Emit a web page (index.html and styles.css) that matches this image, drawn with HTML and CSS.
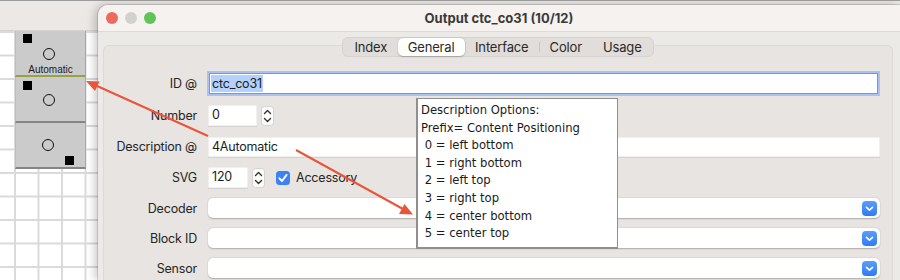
FILE: index.html
```html
<!DOCTYPE html>
<html>
<head>
<meta charset="utf-8">
<link rel="stylesheet" href="styles.css">
</head>
<body>
<div class="app">
  <div class="canvas-pane">
    <div class="toolbar"></div>
    <div class="grid">
      <div class="block block-sel">
        <span class="sq sq-tl"></span>
        <span class="ring ring-1"></span>
        <span class="blabel">Automatic</span>
      </div>
      <div class="block">
        <span class="sq sq-tl2"></span>
        <span class="ring ring-1"></span>
      </div>
      <div class="block">
        <span class="ring ring-3"></span>
        <span class="sq sq-br"></span>
      </div>
    </div>
  </div>

  <div class="window">
    <div class="titlebar">
      <div class="lights">
        <span class="light red"></span>
        <span class="light grey"></span>
        <span class="light green"></span>
      </div>
      <div class="title">Output ctc_co31 (10/12)</div>
    </div>
    <div class="content">
      <div class="tabbox">
        <div class="tabs">
          <span class="tab">Index</span>
          <span class="tab active">General</span>
          <span class="tab sep">Interface</span>
          <span class="tab sep">Color</span>
          <span class="tab">Usage</span>
        </div>
        <div class="form">
          <div class="lbl r-id">ID @</div>
          <div class="field focus r-id"><span class="sel">ctc_co31</span></div>

          <div class="lbl">Number</div>
          <div class="inline">
            <div class="field num">0</div>
            <svg class="stepper" width="13" height="20" viewBox="0 0 13 20"><rect x="0.5" y="0.5" width="12" height="19" rx="3" fill="#fbfbfb" stroke="#d6d3d0"/><path d="M3.5 7.5 L6.5 4.5 L9.5 7.5" fill="none" stroke="#333" stroke-width="1.4" stroke-linecap="round" stroke-linejoin="round"/><path d="M3.5 12.5 L6.5 15.5 L9.5 12.5" fill="none" stroke="#333" stroke-width="1.4" stroke-linecap="round" stroke-linejoin="round"/></svg>
          </div>

          <div class="lbl">Description @</div>
          <div class="field">4Automatic</div>

          <div class="lbl">SVG</div>
          <div class="inline">
            <div class="field svg">120</div>
            <svg class="stepper" width="13" height="20" viewBox="0 0 13 20"><rect x="0.5" y="0.5" width="12" height="19" rx="3" fill="#fbfbfb" stroke="#d6d3d0"/><path d="M3.5 7.5 L6.5 4.5 L9.5 7.5" fill="none" stroke="#333" stroke-width="1.4" stroke-linecap="round" stroke-linejoin="round"/><path d="M3.5 12.5 L6.5 15.5 L9.5 12.5" fill="none" stroke="#333" stroke-width="1.4" stroke-linecap="round" stroke-linejoin="round"/></svg>
            <svg class="check" width="14" height="14" viewBox="0 0 14 14"><rect x="0" y="0" width="14" height="14" rx="3.5" fill="#3a82f6"/><path d="M3.4 7.3 L6 10 L10.6 3.9" fill="none" stroke="#fff" stroke-width="1.9" stroke-linecap="round" stroke-linejoin="round"/></svg>
            <span class="chk-label">Accessory</span>
          </div>

          <div class="lbl">Decoder</div>
          <div class="field select"><span class="pop"><svg width="15" height="15" viewBox="0 0 15 15"><path d="M4.5 6.3 L7.5 9.2 L10.5 6.3" fill="none" stroke="#fff" stroke-width="1.6" stroke-linecap="round" stroke-linejoin="round"/></svg></span></div>

          <div class="lbl">Block ID</div>
          <div class="field select"><span class="pop"><svg width="15" height="15" viewBox="0 0 15 15"><path d="M4.5 6.3 L7.5 9.2 L10.5 6.3" fill="none" stroke="#fff" stroke-width="1.6" stroke-linecap="round" stroke-linejoin="round"/></svg></span></div>

          <div class="lbl">Sensor</div>
          <div class="field select"><span class="pop"><svg width="15" height="15" viewBox="0 0 15 15"><path d="M4.5 6.3 L7.5 9.2 L10.5 6.3" fill="none" stroke="#fff" stroke-width="1.6" stroke-linecap="round" stroke-linejoin="round"/></svg></span></div>
        </div>
      </div>
    </div>
  </div>
</div>

<div class="tooltip"><div>Description Options:</div><div>Prefix= Content Positioning</div><div>&nbsp;0 = left bottom</div><div>&nbsp;1 = right bottom</div><div>&nbsp;2 = left top</div><div>&nbsp;3 = right top</div><div>&nbsp;4 = center bottom</div><div>&nbsp;5 = center top</div></div>

<svg class="arrows" width="900" height="280" viewBox="0 0 900 280">
  <line x1="208" y1="135" x2="96" y2="84.5" stroke="#e9553a" stroke-width="2"/>
  <polygon points="86,80 99.5,80.5 95,90" fill="#e9553a"/>
  <line x1="296" y1="149" x2="403" y2="208" stroke="#e9553a" stroke-width="2"/>
  <polygon points="413,213.5 399,213 404.5,203" fill="#e9553a"/>
</svg>
</body>
</html>
```

FILE: styles.css
```css
html, body {
  margin: 0;
  padding: 0;
}
body {
  width: 900px;
  height: 280px;
  overflow: hidden;
  position: relative;
  background: #ebe8e5;
  border-top: 1px solid #9c9c9c;
  box-sizing: border-box;
  font-family: "Inter", "Liberation Sans", sans-serif;
  color: #262626;
}
.app {
  display: flex;
  height: 279px;
}
.canvas-pane {
  width: 98px;
  flex: none;
  display: flex;
  flex-direction: column;
}
.toolbar {
  height: 29px;
  border-bottom: 1px solid #d6d4d1;
  background: #ebe8e5;
}
.grid {
  flex: 1;
  background-color: #fff;
  background-image:
    linear-gradient(to right, #dadada 2px, transparent 2px),
    linear-gradient(to bottom, #dadada 2px, transparent 2px);
  background-size: 23.5px 23.5px;
  background-position: 14px 0;
  display: flex;
  flex-direction: column;
  padding-left: 15px;
}
.block {
  width: 69px;
  height: 44px;
  background: #cbcbcb;
  border-bottom: 2px solid #858585;
  border-right: 1px solid #a8a8a8;
  border-left: 1px solid #bdbdbd;
  box-sizing: content-box;
  position: relative;
}
.block-sel {
  border-right: 1px solid #a9b05a;
  border-bottom: 2px solid #98a444;
}
.sq {
  position: absolute;
  width: 9px;
  height: 9px;
  background: #000;
}
.sq-tl { left: 7px; top: 3px; }
.sq-tl2 { left: 7px; top: 4px; }
.sq-br { left: 49px; top: 33px; }
.ring {
  position: absolute;
  width: 10px;
  height: 10px;
  border: 1.5px solid #111;
  border-radius: 50%;
}
.ring-1 { left: 27px; top: 17px; }
.ring-3 { left: 26px; top: 16px; }
.blabel {
  position: absolute;
  left: 0;
  right: 0;
  top: 33px;
  text-align: center;
  font-family: "Liberation Sans", sans-serif;
  font-size: 10px;
  color: #1a1a1a;
}

.window {
  flex: 1;
  margin-top: 4px;
  background: #eceae7;
  border-top-left-radius: 10px;
  box-shadow: -3px 0 10px rgba(0, 0, 0, 0.22), 0 0 0 1px rgba(0, 0, 0, 0.12);
  overflow: hidden;
  display: flex;
  flex-direction: column;
}
.titlebar {
  height: 26px;
  flex: none;
  background: #f5f2ef;
  border-bottom: 1px solid #dedbd8;
  display: flex;
  align-items: center;
}
.lights {
  display: flex;
  gap: 7px;
  padding-left: 8px;
  width: 50px;
  flex: none;
}
.light {
  width: 12px;
  height: 12px;
  border-radius: 50%;
}
.red { background: #ec6a5f; }
.grey { background: #d3d1cf; }
.green { background: #61c454; }
.title {
  flex: 1;
  text-align: center;
  font-weight: 700;
  font-size: 13px;
  color: #3a3a3a;
  margin-left: -58px;
}
.content {
  flex: 1;
  padding: 13px 7px 0 5px;
}
.tabbox {
  background: #e7e4e1;
  border: 1px solid #dcd9d6;
  border-bottom: none;
  border-radius: 6px 6px 0 0;
  height: 240px;
}
.tabs {
  display: flex;
  width: max-content;
  margin: -9px auto 0;
  height: 20px;
  background: #e0ddda;
  border: 1px solid #d6d3d0;
  border-radius: 6px;
  box-sizing: border-box;
  align-items: center;
  font-size: 13px;
  letter-spacing: -0.15px;
  position: relative;
  padding: 0 1px;
}
.tab {
  padding: 0 10.5px;
  height: 18px;
  line-height: 18px;
  color: #2a2a2a;
  position: relative;
}
.tab.sep::before {
  content: "";
  position: absolute;
  left: 0;
  top: 4px;
  height: 10px;
  border-left: 1px solid #c9c6c3;
}
.tab.active {
  background: #fff;
  border-radius: 5px;
  box-shadow: 0 0.5px 1.5px rgba(0, 0, 0, 0.25);
  padding: 0 10px;
}
.form {
  display: grid;
  grid-template-columns: 87px 1fr;
  grid-template-rows: 24px 21px 21px 21px 20px 20px 20px;
  column-gap: 11px;
  row-gap: 10px;
  padding: 14px 12px 0 6px;
  font-size: 12.5px;
  letter-spacing: -0.2px;
  align-items: center;
}
.lbl {
  text-align: right;
  color: #262626;
  white-space: nowrap;
}
.field {
  background: #fff;
  height: 20px;
  box-sizing: border-box;
  line-height: 20px;
  padding-left: 4px;
  color: #1c1c1c;
  box-shadow: 0 0.5px 0 rgba(0, 0, 0, 0.15), inset 0 0 0 0.5px #e3e1df;
}
.field.focus {
  height: 19px;
  line-height: 19px;
  margin: 0 3px 0 2px;
  padding-left: 1px;
  box-shadow: 0 0 0 1px #6d95ea, 0 0 0 3px #a9c1f3;
}
.sel {
  background: #b3d1fb;
  padding: 1px 1px;
}
.inline {
  display: flex;
  align-items: center;
  height: 21px;
}
.field.num {
  width: 49px;
  height: 21px;
}
.field.svg {
  width: 40px;
  height: 21px;
}
.stepper {
  margin-left: 4px;
}
.check {
  margin-left: 11px;
}
.chk-label {
  margin-left: 6px;
  color: #262626;
}
.field.select {
  border-radius: 5px;
  display: flex;
  justify-content: flex-end;
  align-items: center;
  padding-right: 3px;
  box-shadow: 0 0.5px 1.5px rgba(0, 0, 0, 0.25);
}
.pop {
  width: 15px;
  height: 15px;
  border-radius: 4px;
  background: linear-gradient(#5c9df9, #2f7bf5);
  display: flex;
}
.tooltip {
  position: absolute;
  left: 416px;
  top: 97px;
  width: 196px;
  height: 145px;
  background: #fff;
  border: 2px solid #8f8f8f;
  border-top-width: 1px;
  border-right-width: 1px;
  padding: 3px 0 0 3px;
  font-family: "DejaVu Sans", sans-serif;
  font-size: 11.6px;
  line-height: 17.6px;
  color: #1a1a1a;
  white-space: nowrap;
}
.arrows {
  position: absolute;
  left: 0;
  top: 0;
  pointer-events: none;
}
```
